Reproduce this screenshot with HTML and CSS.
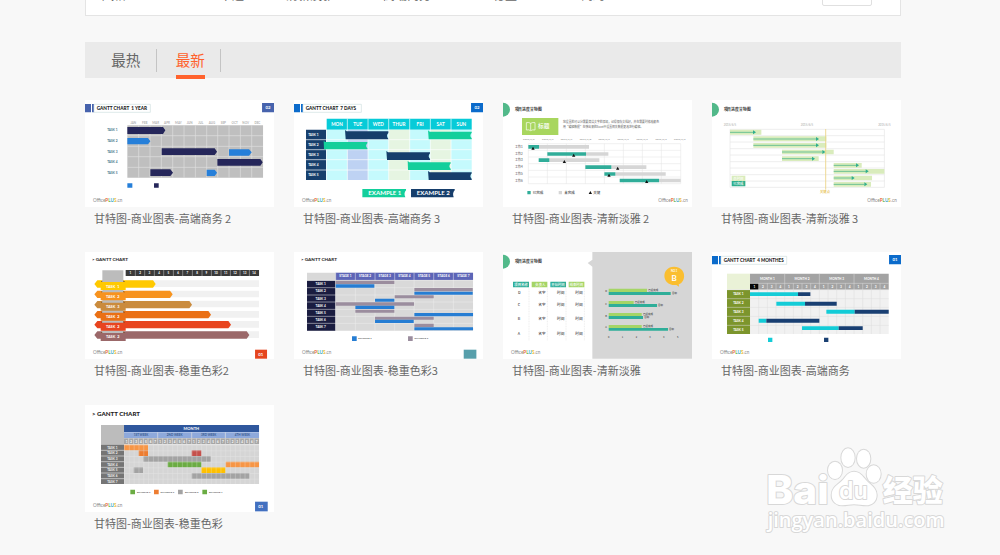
FILE: index.html
```html
<!DOCTYPE html>
<html lang="zh-CN">

<head>
  <meta charset="UTF-8">
  <meta name="viewport" content="width=device-width, initial-scale=1.0">
  <title>甘特图 - OfficePLUS</title>
  <link rel="stylesheet" href="styles.css">
</head>

<body>
  <!-- shared pieces of the thumbnails -->
  <svg class="defs" width="0" height="0">
    <symbol id="logo" viewBox="0 0 90 20" overflow="visible">
      <text x="0" y="15" font-size="15.5" fill="#888" font-weight="400" textLength="88" lengthAdjust="spacingAndGlyphs">Office<tspan fill="#e8643c" font-weight="700">P</tspan><tspan fill="#6fb54a" font-weight="700">L</tspan><tspan fill="#45a9c9" font-weight="700">U</tspan><tspan fill="#efbd3a" font-weight="700">S</tspan>.cn</text>
    </symbol>
    <symbol id="green-title" viewBox="0 0 130 44" overflow="visible">
      <path d="M0 0a21 21 0 0 1 0 42z" fill="#52b98a" />
      <text class="cjk" x="35" y="24" font-size="12" font-weight="900" fill="#333" textLength="80" lengthAdjust="spacingAndGlyphs">项目进度甘特图</text>
    </symbol>
  </svg>

  <div class="page">
    <div class="filter">
      <span class="filter-name">风格</span>
      <span class="filter-item item-1">卡通</span>
      <span class="filter-item item-2">清新淡雅</span>
      <span class="filter-item item-3">高端商务</span>
      <span class="filter-item item-4">稳重</span>
      <span class="filter-item item-5">简约</span>
      <span class="filter-more"></span>
    </div>

    <div class="tabs">
      <a class="tab" href="#">最热</a>
      <a class="tab active" href="#">最新</a>
    </div>

    <div class="list">
      <!-- 1 YEAR -->
      <div class="card">
        <svg class="thumb" viewBox="15 15 568 320">
          <path d="M15 27h18v25H15zM36 27h6v25h-6zM546 24h37v28h-37z" fill="#4763ad" />
          <path d="M42 28h169v24H42z" fill="#fff" stroke="#cfe0e0" stroke-width="2" />
          <text x="50" y="45" font-size="14" font-weight="900" fill="#222" textLength="151" lengthAdjust="spacingAndGlyphs">GANTT CHART &#160;1 YEAR</text>
          <text x="564" y="43" font-size="13" fill="#fff" class="mid">02</text>
          <path d="M142 91h407v157H142z" fill="#bfbfbf" />
          <path d="M142 122h407M142 154h407M142 185h407M142 217h407M176 91v157M210 91v157M244 91v157M278 91v157M312 91v157M346 91v157M380 91v157M413 91v157M447 91v157M481 91v157M515 91v157" stroke="#e0e0e0" stroke-width="2" />
          <g class="mid" font-size="9" fill="#b3b3b3">
            <text x="160" y="86">JAN</text><text x="194" y="86">FEB</text><text x="227" y="86">MAR</text><text x="261" y="86">APR</text>
            <text x="295" y="86">MAY</text><text x="329" y="86">JUN</text><text x="362" y="86">JUL</text><text x="396" y="86">AUG</text>
            <text x="430" y="86">SEP</text><text x="464" y="86">OCT</text><text x="497" y="86">NOV</text><text x="532" y="86">DEC</text>
          </g>
          <g class="mid" font-size="9.5" fill="#47798a">
            <text x="97" y="109">TASK 1</text><text x="97" y="141">TASK 2</text><text x="97" y="173">TASK 3</text><text x="97" y="205">TASK 4</text><text x="97" y="236">TASK 5</text>
          </g>
          <path d="M142 96h107l7 10-7 11H142zM245 160h159l7 10-7 10H245zM412 192h129l7 10-7 10H412zM211 223h60l8 10-8 10h-60zM222 265h14v13h-14z" fill="#25265a" />
          <path d="M142 129h62l7 10-7 9h-62zM447 163h60l8 9-8 10h-60zM380 224h24l7 9-7 10h-24zM142 265h15v13h-15z" fill="#267fd9" />
          <use href="#logo" x="39" y="307" width="90" height="20" />
        </svg>
        <p class="name">甘特图-商业图表-高端商务 2</p>
      </div>

      <!-- 7 DAYS -->
      <div class="card">
        <svg class="thumb" viewBox="18 15 568 320">
          <path d="M18 27h18v25H18zM39 27h6v25h-6zM549 24h37v28h-37z" fill="#0b6bcb" />
          <path d="M45 28h175v24H45z" fill="#fff" stroke="#cfe0e0" stroke-width="2" />
          <text x="53" y="45" font-size="14" font-weight="900" fill="#222" textLength="151" lengthAdjust="spacingAndGlyphs">GANTT CHART &#160;7 DAYS</text>
          <text x="567" y="43" font-size="13" fill="#fff" class="mid">02</text>
          <path d="M116 71h435v33H116z" fill="#07cbd8" />
          <path d="M116 104h435v151H116z" fill="#c5fafd" />
          <path d="M178 104h62v151h-62z" fill="#bed2f3" />
          <path d="M302 104h63v151h-63zM427 104h62v151h-62z" fill="#e6f5e2" />
          <path d="M54 104h60v151H54z" fill="#173f6c" />
          <path d="M54 134h497M54 164h497M54 194h497M54 225h497M178 71v184M240 71v184M302 71v184M365 71v184M427 71v184M489 71v184" stroke="#fff" stroke-width="2" />
          <g class="mid" font-size="14" fill="#fff">
            <text x="147" y="93">MON</text><text x="209" y="93">TUE</text><text x="271" y="93">WED</text><text x="333" y="93">THUR</text><text x="396" y="93">FRI</text><text x="458" y="93">SAT</text><text x="520" y="93">SUN</text>
          </g>
          <g class="mid" font-size="9.5" fill="#fff">
            <text x="76" y="122">TASK 1</text><text x="76" y="152">TASK 2</text><text x="76" y="182">TASK 3</text><text x="76" y="213">TASK 4</text><text x="76" y="243">TASK 5</text>
          </g>
          <path d="M171 105l5 4h125v5q-8 7 0 18v1H173zM295 168l5 4h126v3q-8 9 0 17v3H297zM420 228l5 4h126v3q-8 9 0 17v3H422zM369 282h131v4q-8 9-3 21H369z" fill="#163e6b" />
          <path d="M420 106l5 4h126v3q-8 9 0 17v3H422zM107 138l5 3h126v4q-8 7 0 15v3H108zM359 198l5 4h124v3q-8 9 0 17v3H360zM223 282h131v4q-8 9-2 21H223z" fill="#13cf9b" />
          <text x="241" y="301" font-size="17" font-weight="700" fill="#fff" textLength="99" lengthAdjust="spacingAndGlyphs">EXAMPLE 1</text>
          <text x="386" y="301" font-size="17" font-weight="700" fill="#fff" textLength="99" lengthAdjust="spacingAndGlyphs">EXAMPLE 2</text>
          <use href="#logo" x="42" y="307" width="90" height="20" />
        </svg>
        <p class="name">甘特图-商业图表-高端商务 3</p>
      </div>

      <!-- progress with key points -->
      <div class="card">
        <svg class="thumb" viewBox="18 15 568 320">
          <use href="#green-title" x="18" y="23" width="130" height="44" />
          <path d="M75 69h109v51H75z" fill="#a8d65e" />
          <path d="M101 85q-6-4-13-2v22q7-2 13 2q6-4 13-2V83q-7-2-13 2zv21" fill="none" stroke="#fff" stroke-width="2" />
          <text class="cjk" x="123" y="99" font-size="17" font-weight="700" fill="#fff">标题</text>
          <g class="cjk" font-size="9" fill="#777">
            <text x="198" y="83" textLength="288" lengthAdjust="spacingAndGlyphs">您设置的可以分需要简洁文字的添加，记得保存文档好，并在需要时修改颜色</text>
            <text x="198" y="98" textLength="240" lengthAdjust="spacingAndGlyphs">用“编辑数据”在弹出来的Excel中设置相关数据更改进行编辑。</text>
          </g>
          <path d="M94 146h457M94 166h457M94 186h457M94 206h457M94 226h457M94 246h457M94 266h457M94 146v120M151 146v120M208 146v120M265 146v120M322 146v120M379 146v120M436 146v120M493 146v120M551 146v120" stroke="#e3e3e3" stroke-width="1.5" />
          <g class="mid thin" font-size="8" fill="#888">
            <text x="95" y="136">2015/6/5</text><text x="152" y="136">2015/6/6</text><text x="208" y="136">2015/6/7</text><text x="265" y="136">2015/6/8</text><text x="321" y="136">2015/6/9</text><text x="378" y="136">2015/6/9</text><text x="435" y="136">2015/6/9</text><text x="492" y="136">2015/6/9</text><text x="548" y="136">2015/6/9</text>
          </g>
          <g class="cjk" font-size="9" fill="#666">
            <text x="54" y="159">工作1</text><text x="54" y="179">工作2</text><text x="54" y="199">工作3</text><text x="54" y="220">工作4</text><text x="54" y="240">工作5</text><text x="54" y="260">工作6</text>
          </g>
          <path d="M126 150h150v11H126zM267 172h67v10h-67zM157 190h150v11H157zM343 211h105v11H343zM355 232h151v10H355zM486 251h65v11h-65zM185 288h10v10h-10z" fill="#d6d6d6" />
          <path d="M94 150h32v11H94zM151 172h116v10H151zM125 190h32v11h-32zM265 211h78v11h-78zM322 232h33v10h-33zM368 251h118v11H368zM91 288h10v10H91z" fill="#30ad99" />
          <path d="M108 155l5 9h-10zM230 176l5 9h-10zM202 195l5 9h-10zM362 215l5 9h-10zM336 236l5 9h-10zM449 255l5 9h-10zM280 288l5 9h-10z" fill="#111" />
          <g class="cjk" font-size="10.5" fill="#444">
            <text x="107" y="297">已完成</text><text x="202" y="297">未完成</text><text x="289" y="297">关键</text>
          </g>
          <use href="#logo" x="484" y="307" width="90" height="20" />
        </svg>
        <p class="name">甘特图-商业图表-清新淡雅 2</p>
      </div>

      <!-- arrows -->
      <div class="card">
        <svg class="thumb" viewBox="18 15 568 320">
          <use href="#green-title" x="18" y="23" width="130" height="44" />
          <g class="mid thin" font-size="8.5" fill="#aaa">
            <text x="72" y="93">2015/6/5</text><text x="303" y="93">2015/6/5</text><text x="535" y="93">2015/6/5</text>
          </g>
          <path d="M72 103h463v174H72zM72 122h463M72 141h463M72 161h463M72 180h463M72 200h463M72 219h463M72 239h463M72 258h463" fill="none" stroke="#e6e6e6" stroke-width="2" />
          <path d="M72 104h94v15H72zM142 124h219v15H142zM142 144h219v14H142zM228 164h155v14H228zM228 184h110v14H228zM383 204h84v14h-84zM383 222h152v14H383zM383 242h115v14H383zM383 261h112v14H383zM77 242h41v16H77z" fill="#d9ecbc" />
          <path d="M359 102v182" stroke="#ebd181" stroke-width="2.5" />
          <path d="M72 112h70M142 132h188M142 151h188M228 171h122M228 191h90M383 211h68M383 229h98M383 249h56M383 268h92" stroke="#55b98b" stroke-width="2.5" />
          <path d="M141 106l9 6-9 6zM330 126l9 6-9 6zM330 145l9 6-9 6zM349 165l9 6-9 6zM318 185l9 6-9 6zM450 205l9 6-9 6zM479 223l9 6-9 6zM437 243l9 6-9 6zM475 262l9 6-9 6zM77 258h41v16H77z" fill="#2fae8d" />
          <g class="cjk" font-size="10" fill="#fff"><text x="82" y="254">总时间</text><text x="82" y="270">已完成</text></g>
          <text class="cjk" x="342" y="295" font-size="10" fill="#e5b93a">关键点</text>
          <use href="#logo" x="484" y="307" width="90" height="20" />
        </svg>
        <p class="name">甘特图-商业图表-清新淡雅 3</p>
      </div>

      <!-- ribbons -->
      <div class="card">
        <svg class="thumb" viewBox="15 15 568 320">
          <text x="36" y="43" font-size="13" font-weight="900" fill="#333" textLength="108" lengthAdjust="spacingAndGlyphs">&gt; GANTT CHART</text>
          <path d="M67 70h63v190H67z" fill="#bcbcbc" />
          <path d="M137 69h400v18H137z" fill="#3a3a3a" />
          <path d="M137 100h400v20H137zM137 131h400v20H137zM137 161h400v20H137zM137 192h400v20H137zM137 222h400v20H137zM137 253h400v20H137z" fill="#f1f1f1" />
          <path d="M166 69v18M194 69v18M223 69v18M251 69v18M280 69v18M308 69v18M337 69v18M366 69v18M394 69v18M423 69v18M451 69v18M480 69v18M508 69v18" stroke="#aaa" stroke-width="2" />
          <g class="mid" font-size="9" fill="#fff">
            <text x="151" y="82">1</text><text x="180" y="82">2</text><text x="208" y="82">3</text><text x="237" y="82">4</text><text x="265" y="82">5</text><text x="294" y="82">6</text><text x="322" y="82">7</text><text x="351" y="82">8</text><text x="379" y="82">9</text><text x="408" y="82">10</text><text x="437" y="82">11</text><text x="465" y="82">12</text><text x="494" y="82">13</text><text x="522" y="82">14</text>
          </g>
          <path d="M43 111l9-11h14v5h64v-5h89l8 11-8 11h-82v7H62v-7H52z" fill="#ffc900" />
          <path d="M43 142l9-11h14v5h64v-5h140l8 11-8 11H137v7H62v-7H52z" fill="#f7931e" />
          <path d="M43 173l9-11h14v5h64v-5h198l8 11-8 11H137v7H62v-7H52z" fill="#ca8b3d" />
          <path d="M43 203l9-11h14v5h64v-5h255l8 11-8 11H137v7H62v-7H52z" fill="#ea7015" />
          <path d="M43 233l9-11h14v5h64v-5h315l8 11-8 11H137v7H62v-7H52z" fill="#e8451f" />
          <path d="M43 264l9-11h14v5h64v-5h370l8 11-8 11H137v7H62v-7H52z" fill="#9b6869" />
          <path d="M63 105l4-5v5zM130 105v-5l5 5zM63 136l4-5v5zM130 136v-5l5 5zM63 167l4-5v5zM130 167v-5l5 5zM63 197l4-5v5zM130 197v-5l5 5zM63 227l4-5v5zM130 227v-5l5 5zM63 258l4-5v5zM130 258v-5l5 5z" fill="#704b25" />
          <g class="mid" font-size="11.5" fill="#fff">
            <text x="98" y="122">TASK &#160;1</text><text x="98" y="152">TASK &#160;2</text><text x="98" y="183">TASK &#160;3</text><text x="98" y="213">TASK &#160;2</text><text x="98" y="244">TASK &#160;2</text><text x="98" y="274">TASK &#160;2</text>
          </g>
          <path d="M525 308h36v27h-36z" fill="#e5451e" />
          <text x="542" y="327" font-size="13" fill="#fff" class="mid">01</text>
          <use href="#logo" x="39" y="307" width="90" height="20" />
        </svg>
        <p class="name">甘特图-商业图表-稳重色彩2</p>
      </div>

      <!-- seven stages -->
      <div class="card">
        <svg class="thumb" viewBox="18 15 568 320">
          <text x="39" y="43" font-size="13" font-weight="900" fill="#333" textLength="108" lengthAdjust="spacingAndGlyphs">&gt; GANTT CHART</text>
          <path d="M57 77h498v174H57z" fill="#d9d9d9" />
          <path d="M143 77h412v22H143z" fill="#5d65b7" />
          <path d="M57 101h85v150H57z" fill="#1a1c40" />
          <path d="M57 100h498M57 122h498M57 144h498M57 165h498M57 187h498M57 208h498M57 229h498M143 77v174M202 77v174M261 77v174M320 77v174M378 77v174M437 77v174M496 77v174" stroke="#eee" stroke-width="1.5" />
          <path d="M143 101h176v10H143zM379 123h175v10H379zM320 145h117v9H320zM143 166h235v10H143zM202 188h117v9H202zM261 209h176v9H261zM379 230h58v10h-58zM360 268h14v14h-14z" fill="#9b8d9e" />
          <path d="M143 112h116v10H143zM379 134h175v9H379zM261 155h58v9h-58zM202 176h117v10H202zM379 198h176v10H379zM261 218h116v10H261zM379 241h176v9H379zM192 268h14v14h-14z" fill="#267dd3" />
          <g class="mid" font-size="9.5" fill="#fff">
            <text x="172" y="91">STAGE 1</text><text x="231" y="91">STAGE 2</text><text x="290" y="91">STAGE 3</text><text x="349" y="91">STAGE 4</text><text x="408" y="91">STAGE 5</text><text x="467" y="91">STAGE 6</text><text x="526" y="91">STAGE 7</text>
            <text x="98" y="115">TASK 1</text><text x="98" y="136">TASK 2</text><text x="98" y="158">TASK 3</text><text x="98" y="179">TASK 4</text><text x="98" y="201">TASK 5</text><text x="98" y="222">TASK 6</text><text x="98" y="244">TASK 7</text>
          </g>
          <g class="mid" font-size="7.5" fill="#444"><text x="231" y="277">EXAMPLE 1</text><text x="400" y="277">EXAMPLE 2</text></g>
          <path d="M527 308h38v27h-38z" fill="#579fab" />
          <use href="#logo" x="42" y="307" width="90" height="20" />
        </svg>
        <p class="name">甘特图-商业图表-稳重色彩3</p>
      </div>

      <!-- table and bars -->
      <div class="card">
        <svg class="thumb" viewBox="18 15 568 320">
          <use href="#green-title" x="18" y="23" width="130" height="44" />
          <path d="M286 15h300v320H286V59l-14-11 14-10z" fill="#d6d6d6" />
          <path d="M48 104h48v17H48zM160 104h47v17h-47zM335 135h186v9H335zM335 171h145v9H335zM335 207h103v9H335zM335 243h178v8H335z" fill="#2fae99" />
          <path d="M104 104h47v17h-47zM215 104h47v17h-47zM335 125h115v10H335zM335 162h75v9h-75zM335 198h99v9h-99zM335 234h99v9h-99z" fill="#a5d566" />
          <path d="M96 122v160M151 122v160M207 122v160M262 122v160" stroke="#ccc" stroke-width="1" stroke-dasharray="3 2" />
          <g class="cjk mid" font-size="10" fill="#fff"><text x="72" y="116">项目名称</text><text x="130" y="116">负责人</text><text x="183" y="116">开始时间</text><text x="238" y="116">结束时间</text></g>
          <g class="cjk mid" font-size="11" fill="#444">
            <text x="67" y="140">D</text><text x="135" y="140">名字</text><text x="191" y="140">时间</text><text x="246" y="140">时间</text>
            <text x="66" y="177">C</text><text x="135" y="177">名字</text><text x="191" y="177">时间</text><text x="246" y="177">时间</text>
            <text x="66" y="220">B</text><text x="135" y="220">名字</text><text x="191" y="220">时间</text><text x="246" y="220">时间</text>
            <text x="66" y="263">A</text><text x="135" y="263">名字</text><text x="191" y="263">时间</text><text x="246" y="263">时间</text>
          </g>
          <path d="M531 59c37 0 38 45 14 53l1 7-8-5c-46 4-47-55-7-55z" fill="#fabe30" />
          <text x="531" y="74" font-size="8" fill="#fff" class="mid">NO.1</text>
          <text x="531" y="102" font-size="24" fill="#fff" class="mid">B</text>
          <g class="cjk" font-size="7.5" fill="#444">
            <text x="454" y="133">已经完成</text><text x="525" y="142">目标</text><text x="413" y="169">已经完成</text><text x="483" y="178">目标</text><text x="438" y="205">已经完成</text><text x="442" y="214">目标</text><text x="438" y="241">已经完成</text><text x="516" y="249">目标</text>
            <text x="325" y="136">D</text><text x="325" y="173">C</text><text x="325" y="209">B</text><text x="325" y="244">A</text>
            <text x="333" y="272">0</text><text x="374" y="272">1</text><text x="416" y="272">2</text><text x="457" y="272">3</text><text x="498" y="272">4</text><text x="540" y="272">5</text>
          </g>
          <use href="#logo" x="42" y="307" width="90" height="20" />
        </svg>
        <p class="name">甘特图-商业图表-清新淡雅</p>
      </div>

      <!-- 4 MONTHES -->
      <div class="card">
        <svg class="thumb" viewBox="18 15 568 320">
          <path d="M18 27h18v25H18zM39 27h6v25h-6zM549 24h37v28h-37z" fill="#0b6bcb" />
          <path d="M45 28h197v24H45z" fill="#fff" stroke="#cfe0e0" stroke-width="2" />
          <text x="53" y="45" font-size="14" font-weight="900" fill="#222" textLength="180" lengthAdjust="spacingAndGlyphs">GANTT CHART &#160;4 MONTHES</text>
          <text x="567" y="43" font-size="13" fill="#fff" class="mid">01</text>
          <path d="M63 80h69v48H63z" fill="#eaf2d7" />
          <path d="M132 80h416v48H132z" fill="#a3a3a3" />
          <path d="M132 110h26v18h-26z" fill="#080808" />
          <path d="M132 129h416v132H132z" fill="#f1f1f1" />
          <path d="M63 129h69v132H63z" fill="#7c952c" />
          <path d="M132 109h416M63 128h485M63 155h485M63 181h485M63 208h485M63 235h485M158 109v152M184 109v152M210 109v152M236 80v181M262 109v152M288 109v152M314 109v152M340 80v181M366 109v152M392 109v152M418 109v152M444 80v181M470 109v152M496 109v152M522 109v152" stroke="#ddd" stroke-width="1.5" />
          <path d="M132 136h144v11H132zM211 164h86v12h-86zM361 188h85v12h-85zM158 215h23v12h-23zM288 238h110v11H288zM186 272h13v13h-13z" fill="#13ccd7" />
          <path d="M276 136h37v11h-37zM297 164h95v12h-95zM446 188h102v12H446zM181 215h159v12H181zM398 238h72v11h-72zM354 272h13v13h-13z" fill="#193f72" />
          <g class="mid" font-size="9.5" fill="#fff">
            <text x="184" y="98">MONTH 1</text><text x="288" y="98">MONTH 2</text><text x="392" y="98">MONTH 3</text><text x="496" y="98">MONTH 4</text>
            <text x="145" y="122">1</text><text x="171" y="122">2</text><text x="197" y="122">3</text><text x="223" y="122">4</text><text x="249" y="122">1</text><text x="275" y="122">2</text><text x="301" y="122">3</text><text x="327" y="122">4</text><text x="353" y="122">1</text><text x="379" y="122">2</text><text x="405" y="122">3</text><text x="431" y="122">4</text><text x="457" y="122">1</text><text x="483" y="122">2</text><text x="509" y="122">3</text><text x="535" y="122">4</text>
            <text x="97" y="145">TASK 1</text><text x="97" y="172">TASK 2</text><text x="97" y="198">TASK 3</text><text x="97" y="225">TASK 4</text><text x="97" y="251">TASK 5</text>
          </g>
          <use href="#logo" x="42" y="307" width="90" height="20" />
        </svg>
        <p class="name">甘特图-商业图表-高端商务</p>
      </div>

      <!-- one month, by day -->
      <div class="card">
        <svg class="thumb" viewBox="15 15 568 320">
          <defs>
            <pattern id="days" x="132" y="134" width="14.46" height="17" patternUnits="userSpaceOnUse">
              <path d="M0 0h14.46M0 0v17" stroke="#ececec" stroke-width="2.5" />
            </pattern>
          </defs>
          <text x="36" y="47" font-size="18" font-weight="900" fill="#222" textLength="144" lengthAdjust="spacingAndGlyphs">&gt; GANTT CHART</text>
          <path d="M63 75h69v59H63z" fill="#bcbcbc" />
          <path d="M132 75h405v21H132z" fill="#2f579d" />
          <path d="M132 97h405v17H132z" fill="#8ea9db" />
          <path d="M132 115h405v18H132z" fill="#a6a6a6" />
          <path d="M63 134h69v118H63z" fill="#757575" />
          <path d="M132 134h405v118H132z" fill="#d5d5d5" />
          <path d="M132 134h72v17h-72zM437 185h100v17H437z" fill="#f79646" />
          <path d="M176 151h28v17h-28zM222 269h14v14h-14z" fill="#ed7d31" />
          <path d="M335 151h29v17h-29z" fill="#c5504b" />
          <path d="M190 168h202v17H190zM161 202h28v17h-28zM335 219h173v17H335zM294 269h14v14h-14z" fill="#a3a3a3" />
          <path d="M263 185h101v17H263zM151 269h14v14h-14zM367 269h14v14h-14z" fill="#6bac43" />
          <path d="M364 202h72v17h-72z" fill="#ffc000" />
          <path d="M132 134h405v118H132z" fill="url(#days)" opacity=".65" />
          <path d="M63 151h69M63 168h69M63 185h69M63 202h69M63 219h69M63 236h69M233 97v17M335 97v17M436 97v17M146 115v18M161 115v18M175 115v18M190 115v18M204 115v18M219 115v18M233 115v18M248 115v18M262 115v18M277 115v18M291 115v18M306 115v18M320 115v18M335 115v18M349 115v18M363 115v18M378 115v18M392 115v18M407 115v18M421 115v18M436 115v18M450 115v18M465 115v18M479 115v18M493 115v18M508 115v18M522 115v18" stroke="#e2e2e2" stroke-width="2" />
          <text x="334" y="90" font-size="12" fill="#fff" class="mid">MONTH</text>
          <g class="mid" font-size="9" fill="#38598f"><text x="183" y="108">1ST WEEK</text><text x="284" y="108">2ND WEEK</text><text x="386" y="108">3RD WEEK</text><text x="487" y="108">4TH WEEK</text></g>
          <g font-size="9" font-weight="700" fill="#fff">
            <text y="128" x="137 151 166 180 195 209 223">1234567</text><text y="128" x="238 252 267 281 296 310 325">1234567</text><text y="128" x="339 354 368 383 397 411 426">1234567</text><text y="128" x="440 455 469 484 498 513 527">1234567</text>
          </g>
          <g class="mid" font-size="9.5" fill="#eee">
            <text x="97" y="146">TASK 1</text><text x="97" y="163">TASK 2</text><text x="97" y="180">TASK 3</text><text x="97" y="197">TASK 4</text><text x="97" y="214">TASK 5</text><text x="97" y="231">TASK 6</text><text x="97" y="248">TASK 7</text>
          </g>
          <g class="mid" font-size="7.5" fill="#444"><text x="191" y="278">EXAMPLE 1</text><text x="262" y="278">EXAMPLE 2</text><text x="335" y="278">EXAMPLE 3</text><text x="407" y="278">EXAMPLE 4</text></g>
          <path d="M525 305h38v29h-38z" fill="#4270c0" />
          <text x="542" y="325" font-size="13" fill="#fff" class="mid">01</text>
          <use href="#logo" x="39" y="305" width="90" height="20" />
        </svg>
        <p class="name">甘特图-商业图表-稳重色彩</p>
      </div>
    </div>
  </div>

  <!-- watermark -->
  <svg class="watermark" viewBox="0 0 600 330">
    <g class="mark">
      <text class="bai" x="34" y="206" font-size="117" textLength="187" lengthAdjust="spacingAndGlyphs">Bai</text>
      <ellipse cx="240" cy="106" rx="21" ry="26" />
      <ellipse cx="279" cy="68" rx="20" ry="28" />
      <ellipse cx="326" cy="71" rx="20" ry="27" />
      <ellipse cx="356" cy="117" rx="21" ry="26" />
      <path d="M297 110c-18 0-24 14-34 25-13 14-33 22-33 45 0 21 15 31 33 31 13 0 21-3 34-3s23 3 36 3c19 0 32-12 32-31 0-22-20-31-33-46-10-11-17-24-35-24z" />
      <text class="du" x="252" y="193" font-size="72" textLength="86" lengthAdjust="spacingAndGlyphs">du</text>
      <text class="cjk" x="383" y="198" font-size="90" font-weight="900" textLength="180" lengthAdjust="spacingAndGlyphs">经验</text>
      <text x="38" y="277" font-size="59" font-weight="600" textLength="531" lengthAdjust="spacingAndGlyphs">jingyan.baidu.com</text>
    </g>
  </svg>
</body>

</html>
```
FILE: styles.css
```css
* {
  margin: 0;
  padding: 0;
  box-sizing: border-box;
}

body {
  height: 555px;
  overflow: hidden;
  background-color: #f8f8f8;
  font-family: "Noto Sans CJK SC", sans-serif;
  color: #666;
}

.defs {
  display: block;
  height: 0;
}

.page {
  width: 816.4px;
  margin-left: 85px;
}

/* Filter box, scrolled almost out of view */
.filter {
  display: flex;
  height: 36px;
  margin-top: -20px;
  padding: 7px 28px 0 16px;
  background-color: white;
  border: 1px solid #e4e4e4;
  font-size: 12px;
  line-height: 14px;
}

.filter-name {
  width: 118px;
}

.item-1 {
  width: 66px;
}

.item-2 {
  width: 97px;
}

.item-3 {
  width: 110px;
}

.item-4 {
  width: 88px;
}

.filter-more {
  width: 50px;
  height: 18px;
  margin-left: auto;
  border: 1px solid #e0e0e0;
  border-radius: 2px;
}

/* Tabs */
.tabs {
  display: flex;
  height: 36px;
  margin-top: 26.4px;
  padding-left: 7px;
  background-color: #eaeaea;
}

.tab {
  display: flex;
  justify-content: center;
  width: 64.5px;
  height: 23px;
  margin-top: 6.5px;
  padding-left: 4px;
  border-right: 1px solid #c4c4c4;
  color: #666;
  font-size: 14.6px;
  line-height: 21px;
  text-decoration: none;
}

.tab.active {
  color: #ff622d;
}

.tab.active::after {
  content: "";
  width: 29px;
  height: 4px;
  margin-top: 26px;
  margin-left: -29px;
  background-color: #ff622d;
}

/* Templates */
.list {
  display: grid;
  grid-template-columns: repeat(4, 189.4px);
  justify-content: space-between;
  grid-auto-rows: 152.5px;
  margin-top: 21.6px;
}

.thumb {
  display: block;
  width: 189.4px;
  height: 106.7px;
  background-color: white;
  font-family: Lato, "Liberation Sans", sans-serif;
}

.thumb .mid {
  text-anchor: middle;
  font-weight: 700;
}

.thumb .thin {
  font-weight: 400;
}

.thumb .cjk {
  font-family: "Noto Sans CJK SC", sans-serif;
  font-weight: 500;
}

.name {
  padding-left: 9px;
  font-size: 11px;
  line-height: 23.5px;
  white-space: nowrap;
}

.watermark {
  position: absolute;
  left: 755px;
  top: 435px;
  width: 200px;
  height: 110px;
  font-family: "Open Sans", sans-serif;
}

.mark {
  fill: white;
  stroke: #d8d8d8;
  stroke-width: 6px;
  stroke-linejoin: round;
  paint-order: stroke;
}

.mark .cjk {
  font-family: "Noto Sans CJK SC", sans-serif;
}

.mark .bai {
  font-family: Inter, "Liberation Sans", sans-serif;
  font-weight: 800;
}

.mark .du {
  font-family: Inter, "Liberation Sans", sans-serif;
  font-weight: 600;
}
```
